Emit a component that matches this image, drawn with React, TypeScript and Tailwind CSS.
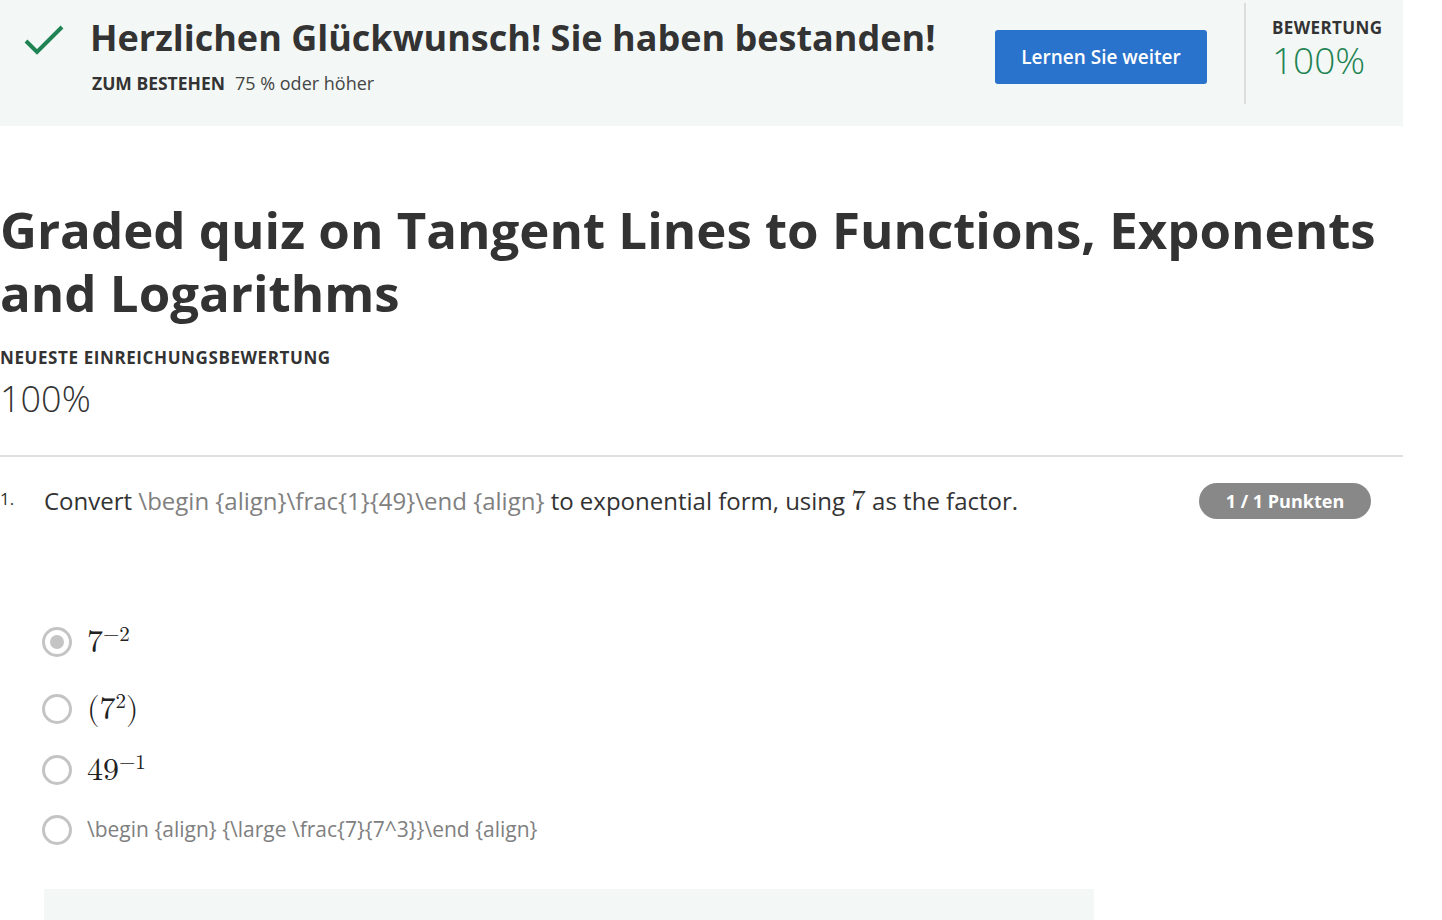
import React from "react";

const sans = { fontFamily: '"Open Sans", "Noto Sans", Arial, sans-serif' };
const serif = { fontFamily: '"Latin Modern Math", "Liberation Serif", "Times New Roman", serif' };

function Radio({ checked }: { checked?: boolean }) {
  return (
    <span className="flex h-[30px] w-[30px] shrink-0 items-center justify-center rounded-full border-[3px] border-[#c4c4c4] bg-white">
      {checked && <span className="h-[14px] w-[14px] rounded-full bg-[#c4c4c4]" />}
    </span>
  );
}

export default function App() {
  return (
    <div className="min-h-[920px] w-[1442px] overflow-hidden bg-white text-[#333]" style={sans}>
      <div className="w-[1403px]">
        {/* Banner */}
        <div className="flex h-[126px] bg-[#f3f8f6]">
          <div className="flex w-[90px] shrink-0 justify-end pr-[24px] pt-[24px]">
            <svg width="42" height="34" viewBox="0 0 42 34" fill="none">
              <path d="M2 17 L13 28 L38 3" stroke="#1f8354" strokeWidth="4" />
            </svg>
          </div>
          <div className="w-[905px] shrink-0 pt-[15px]">
            <div className="text-[36px] font-bold leading-[46px] text-[#333]">Herzlichen Glückwunsch! Sie haben bestanden!</div>
            <div className="mt-[11px] flex items-baseline pl-[2px] leading-[22px]">
              <span className="text-[17.5px] font-bold">ZUM BESTEHEN</span>
              <span className="ml-[10px] text-[18px] text-[#444]">75 % oder höher</span>
            </div>
          </div>
          <div className="w-[249px] shrink-0 pt-[30px]">
            <button className="h-[54px] w-[212px] rounded-[3px] bg-[#2a73cc] text-[19px] font-semibold text-white">Lernen Sie weiter</button>
          </div>
          <div className="mt-[3px] h-[101px] w-[2px] shrink-0 bg-[#dcdcdc]" />
          <div className="flex flex-col pl-[26px] pt-[18px]">
            <div className="text-[17px] font-bold leading-[20px] tracking-[0.4px] text-[#333]">BEWERTUNG</div>
            <div className="mt-[3px] text-[37px] font-light leading-[37px] text-[#1f8354]">100%</div>
          </div>
        </div>

        {/* Heading */}
        <h1 className="mt-[72px] text-[51px] font-bold leading-[63px] text-[#333]">
          Graded quiz on Tangent Lines to Functions, Exponents and Logarithms
        </h1>
        <div className="mt-[23px] text-[17px] font-bold leading-[22px] tracking-[0.6px] text-[#333]">NEUESTE EINREICHUNGSBEWERTUNG</div>
        <div className="mt-[8px] text-[36px] font-light leading-[44px] text-[#333]">100%</div>
        <div className="mt-[34px] h-[2px] w-full bg-[#e0e0e0]" />

        {/* Question */}
        <div className="mt-[26px] flex items-start">
          <div className="w-[44px] pt-[5px] text-[17px] leading-[22px] text-[#333]">1.</div>
          <div className="flex-1 text-[24px] leading-[36px] text-[#333]">
            Convert <span className="text-[#808080]">\begin {"{"}align{"}"}\frac{"{"}1{"}"}{"{"}49{"}"}\end {"{"}align{"}"}</span> to exponential form, using{" "}
            <span className="text-[29px] leading-[20px]" style={serif}>7</span> as the factor.
          </div>
          <div className="mr-[32px] flex h-[36px] w-[172px] items-center justify-center rounded-full bg-[#888] text-[18px] font-bold text-white">
            1 / 1 Punkten
          </div>
        </div>

        {/* Options */}
        <div className="ml-[42px] mt-[93px] flex flex-col">
          <div className="flex h-[60px] items-center gap-[15px]">
            <Radio checked />
            <span className="text-[32px] leading-none text-[#222]" style={serif}>
              7<sup className="top-[-11px] text-[21px]">−2</sup>
            </span>
          </div>
          <div className="mt-[7px] flex h-[60px] items-center gap-[15px]">
            <Radio />
            <span className="text-[32px] leading-none text-[#222]" style={serif}>
              (7<sup className="top-[-11px] text-[21px]">2</sup>)
            </span>
          </div>
          <div className="flex h-[61px] items-center gap-[15px]">
            <Radio />
            <span className="text-[32px] leading-none text-[#222]" style={serif}>
              49<sup className="top-[-11px] text-[21px]">−1</sup>
            </span>
          </div>
          <div className="flex h-[60px] items-center gap-[15px]">
            <Radio />
            <span className="text-[21px] text-[#808080]">\begin {"{"}align{"}"} {"{"}\large \frac{"{"}7{"}"}{"{"}7^3{"}"}{"}"}\end {"{"}align{"}"}</span>
          </div>
        </div>

        <div className="ml-[44px] mt-[29px] h-[60px] w-[1050px] bg-[#f3f8f6]" />
      </div>
    </div>
  );
}
